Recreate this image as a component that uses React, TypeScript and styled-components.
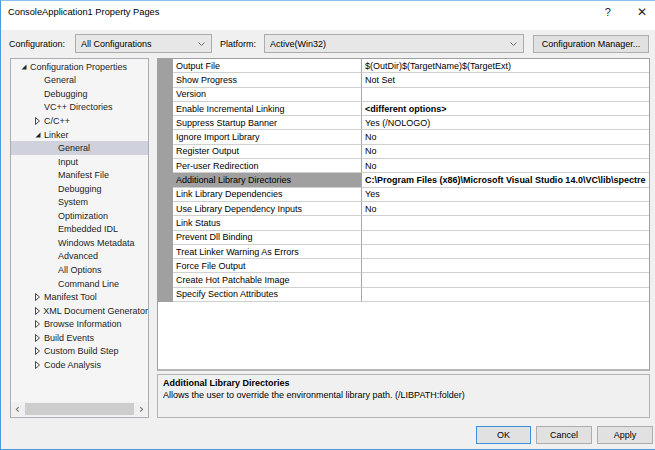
import styled, { createGlobalStyle } from 'styled-components';

const GlobalStyle = createGlobalStyle`
  html, body {
    margin: 0;
    padding: 0;
    background: #f0f0f0;
  }
  body {
    font-family: "Liberation Sans", Arial, sans-serif;
    font-size: 9px;
    color: #000;
  }
`;

type TreeItem = { label: string; level: number; expander?: 'open' | 'closed'; selected?: boolean };

const treeItems: TreeItem[] = [
  { label: 'Configuration Properties', level: 0, expander: 'open' },
  { label: 'General', level: 1 },
  { label: 'Debugging', level: 1 },
  { label: 'VC++ Directories', level: 1 },
  { label: 'C/C++', level: 1, expander: 'closed' },
  { label: 'Linker', level: 1, expander: 'open' },
  { label: 'General', level: 2, selected: true },
  { label: 'Input', level: 2 },
  { label: 'Manifest File', level: 2 },
  { label: 'Debugging', level: 2 },
  { label: 'System', level: 2 },
  { label: 'Optimization', level: 2 },
  { label: 'Embedded IDL', level: 2 },
  { label: 'Windows Metadata', level: 2 },
  { label: 'Advanced', level: 2 },
  { label: 'All Options', level: 2 },
  { label: 'Command Line', level: 2 },
  { label: 'Manifest Tool', level: 1, expander: 'closed' },
  { label: 'XML Document Generator', level: 1, expander: 'closed' },
  { label: 'Browse Information', level: 1, expander: 'closed' },
  { label: 'Build Events', level: 1, expander: 'closed' },
  { label: 'Custom Build Step', level: 1, expander: 'closed' },
  { label: 'Code Analysis', level: 1, expander: 'closed' },
];

type Prop = { name: string; value: string; bold?: boolean; selected?: boolean };

const props: Prop[] = [
  { name: 'Output File', value: '$(OutDir)$(TargetName)$(TargetExt)' },
  { name: 'Show Progress', value: 'Not Set' },
  { name: 'Version', value: '' },
  { name: 'Enable Incremental Linking', value: '<different options>', bold: true },
  { name: 'Suppress Startup Banner', value: 'Yes (/NOLOGO)' },
  { name: 'Ignore Import Library', value: 'No' },
  { name: 'Register Output', value: 'No' },
  { name: 'Per-user Redirection', value: 'No' },
  {
    name: 'Additional Library Directories',
    value: 'C:\\Program Files (x86)\\Microsoft Visual Studio 14.0\\VC\\lib\\spectre',
    bold: true,
    selected: true,
  },
  { name: 'Link Library Dependencies', value: 'Yes' },
  { name: 'Use Library Dependency Inputs', value: 'No' },
  { name: 'Link Status', value: '' },
  { name: 'Prevent Dll Binding', value: '' },
  { name: 'Treat Linker Warning As Errors', value: '' },
  { name: 'Force File Output', value: '' },
  { name: 'Create Hot Patchable Image', value: '' },
  { name: 'Specify Section Attributes', value: '' },
];

const Chevron = () => (
  <svg width="7" height="4" viewBox="0 0 7 4">
    <path d="M0.5 0.5 L3.5 3.5 L6.5 0.5" fill="none" stroke="#6d6d6d" strokeWidth="1" />
  </svg>
);

const Expander = ({ kind }: { kind?: 'open' | 'closed' }) => {
  if (kind === 'open') {
    return (
      <svg width="6" height="6" viewBox="0 0 6 6">
        <path d="M5.5 0.5 L5.5 5.5 L0.5 5.5 Z" fill="#262626" />
      </svg>
    );
  }
  if (kind === 'closed') {
    return (
      <svg width="5" height="8" viewBox="0 0 5 8">
        <path d="M0.5 0.5 L4.5 4 L0.5 7.5 Z" fill="none" stroke="#4a4a4a" strokeWidth="1" />
      </svg>
    );
  }
  return null;
};

const App = () => {
  return (
    <>
      <GlobalStyle />
      <Window>
        <TitleBar>
          <span>ConsoleApplication1 Property Pages</span>
          <TitleButtons>
            <span>?</span>
            <CloseGlyph>✕</CloseGlyph>
          </TitleButtons>
        </TitleBar>

        <ConfigRow>
          <Label>Configuration:</Label>
          <Combo width={137}>
            <span>All Configurations</span>
            <Chevron />
          </Combo>
          <Label $gap={8}>Platform:</Label>
          <Combo width={260}>
            <span>Active(Win32)</span>
            <Chevron />
          </Combo>
          <Button width={116} $ml={9}>Configuration Manager...</Button>
        </ConfigRow>

        <Main>
          <TreePanel>
            <TreeList>
              {treeItems.map((item, i) => (
                <TreeRow key={i} level={item.level} $selected={item.selected}>
                  <ExpanderBox>
                    <Expander kind={item.expander} />
                  </ExpanderBox>
                  <span>{item.label}</span>
                </TreeRow>
              ))}
            </TreeList>
            <HScroll>
              <ScrollArrow>‹</ScrollArrow>
              <ScrollThumb />
              <ScrollArrow>›</ScrollArrow>
            </HScroll>
          </TreePanel>

          <RightColumn>
            <GridPanel>
              {props.map((p, i) => (
                <GridRow key={i}>
                  <Gutter />
                  <NameCell $selected={p.selected}>{p.name}</NameCell>
                  <ValueCell $bold={p.bold}>{p.value}</ValueCell>
                </GridRow>
              ))}
            </GridPanel>
            <DescPanel>
              <DescTitle>Additional Library Directories</DescTitle>
              <div>Allows the user to override the environmental library path. (/LIBPATH:folder)</div>
            </DescPanel>
          </RightColumn>
        </Main>

        <ButtonRow>
          <Button width={55} $default>OK</Button>
          <Button width={56}>Cancel</Button>
          <Button width={56}>Apply</Button>
        </ButtonRow>
      </Window>
    </>
  );
};

const Window = styled.div`
  width: 655px;
  height: 450px;
  box-sizing: border-box;
  border-left: 1px solid #4a9ae0;
  border-bottom: 1px solid #4a9ae0;
  border-top: 1px solid #8cc0ee;
  background: #f0f0f0;
  display: flex;
  flex-direction: column;
  overflow: hidden;
`;

const TitleBar = styled.div`
  height: 29px;
  box-sizing: border-box;
  background: #fff;
  display: flex;
  align-items: flex-start;
  justify-content: space-between;
  padding: 6px 0 0 7px;
  font-size: 9.3px;
`;

const TitleButtons = styled.div`
  display: flex;
  align-items: center;
  gap: 26px;
  padding-right: 8px;
  margin-top: -2px;
  font-size: 11px;
  color: #222;
`;

const CloseGlyph = styled.span`
  font-family: "DejaVu Sans", sans-serif;
  font-size: 12px;
`;

const ConfigRow = styled.div`
  display: flex;
  align-items: center;
  height: 19px;
  margin-top: 4px;
  padding-left: 8px;
`;

const Label = styled.span<{ $gap?: number }>`
  margin-left: ${(p) => p.$gap ?? 0}px;
  margin-right: ${(p) => (p.$gap ? 8 : 10)}px;
`;

const Combo = styled.div<{ width: number }>`
  width: ${(p) => p.width}px;
  height: 19px;
  box-sizing: border-box;
  border: 1px solid #acacac;
  background: #e7e7e7;
  display: flex;
  align-items: center;
  justify-content: space-between;
  padding: 0 6px 0 5px;
`;

const Button = styled.div<{ width: number; $ml?: number; $default?: boolean }>`
  width: ${(p) => p.width}px;
  margin-left: ${(p) => p.$ml ?? 0}px;
  height: 18px;
  box-sizing: border-box;
  border: 1px solid ${(p) => (p.$default ? '#3c8fdd' : '#adadad')};
  background: #e1e1e1;
  display: flex;
  align-items: center;
  justify-content: center;
`;

const Main = styled.div`
  display: flex;
  margin-top: 5px;
  padding-left: 9px;
  gap: 8px;
  height: 360px;
`;

const TreePanel = styled.div`
  width: 139px;
  box-sizing: border-box;
  border: 1px solid #abadb3;
  background: #f5f5f5;
  display: flex;
  flex-direction: column;
`;

const TreeList = styled.div`
  flex: 1;
  padding-top: 1px;
`;

const TreeRow = styled.div<{ level: number; $selected?: boolean }>`
  height: 13.55px;
  display: flex;
  align-items: center;
  padding-left: ${(p) => 6 + p.level * 14}px;
  background: ${(p) => (p.$selected ? '#cfd1dc' : 'transparent')};
  color: #1e1e1e;
  white-space: nowrap;
`;

const ExpanderBox = styled.span`
  width: 13px;
  display: flex;
  align-items: center;
  justify-content: center;
`;

const HScroll = styled.div`
  height: 14px;
  margin-bottom: 1px;
  display: flex;
  align-items: center;
  background: #f0f0f0;
`;

const ScrollArrow = styled.span`
  width: 13px;
  text-align: center;
  font-family: "DejaVu Sans", sans-serif;
  font-size: 12px;
  color: #606060;
  line-height: 14px;
`;

const ScrollThumb = styled.div`
  flex: 1;
  height: 12px;
  background: #cdcdcd;
  margin: 0 1px;
`;

const RightColumn = styled.div`
  width: 493px;
  display: flex;
  flex-direction: column;
  gap: 3px;
`;

const GridPanel = styled.div`
  height: 313px;
  box-sizing: border-box;
  border: 1px solid #a0a0a0;
  border-bottom: 2px solid #b4b4b4;
  background: #fff;
`;

const GridRow = styled.div`
  display: grid;
  grid-template-columns: 15px 189px 1fr;
  height: 14.3px;
`;

const Gutter = styled.div`
  background: #a0a0a0;
`;

const NameCell = styled.div<{ $selected?: boolean }>`
  background: ${(p) => (p.$selected ? '#a0a0a0' : '#fff')};
  border-bottom: 1px solid #d0d0d0;
  border-right: 1px solid #a8a8a8;
  padding-left: 3px;
  display: flex;
  align-items: center;
  white-space: nowrap;
  overflow: hidden;
`;

const ValueCell = styled.div<{ $bold?: boolean }>`
  font-weight: ${(p) => (p.$bold ? 700 : 400)};
  border-bottom: 1px solid #d0d0d0;
  padding-left: 3px;
  display: flex;
  align-items: center;
  white-space: nowrap;
  overflow: hidden;
`;

const DescPanel = styled.div`
  height: 44px;
  box-sizing: border-box;
  border: 1px solid #b4b4b4;
  background: #f0f0f0;
  padding: 3px 5px;
  display: flex;
  flex-direction: column;
  gap: 2px;
`;

const DescTitle = styled.div`
  font-weight: 700;
`;

const ButtonRow = styled.div`
  display: flex;
  justify-content: flex-end;
  gap: 5px;
  margin-top: 8px;
  padding-right: 2px;
`;

export default App;
